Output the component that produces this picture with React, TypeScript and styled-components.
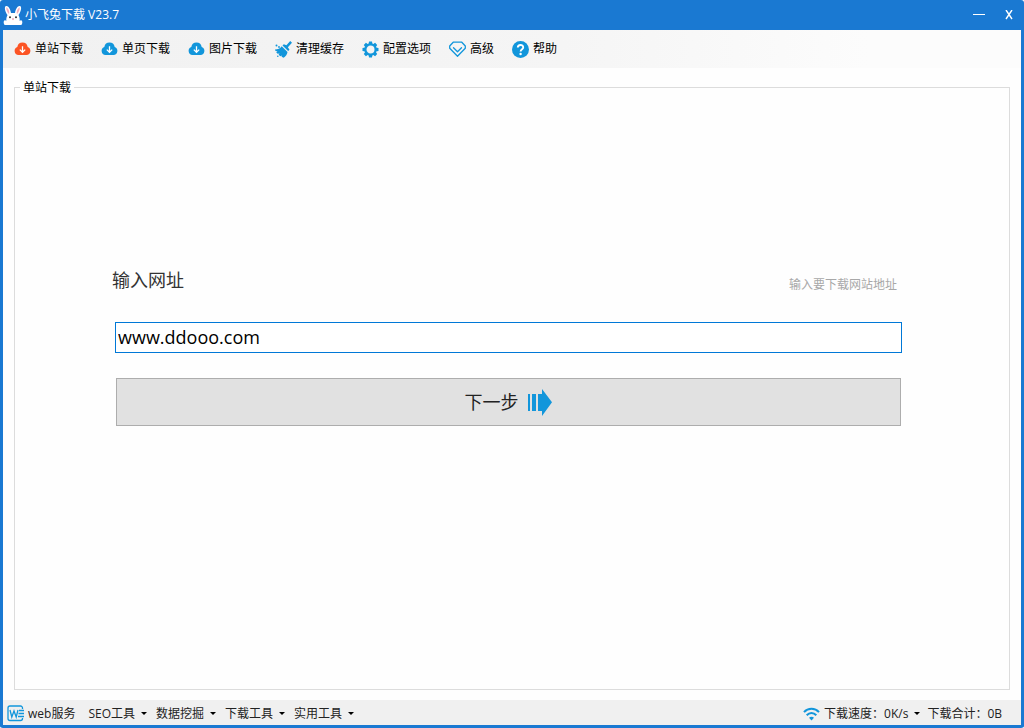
import React from "react";
import styled, { createGlobalStyle } from "styled-components";

const GlobalStyle = createGlobalStyle`
  * { box-sizing: border-box; }
  body {
    margin: 0;
    background: #fff;
    color: #000;
    font: 12px/18px "Open Sans", "Noto Sans CJK SC", sans-serif;
  }
  button, input { font: inherit; color: inherit; }
`;

const Window = styled.div`
  display: flex;
  flex-direction: column;
  min-height: 100vh;
  border: 3px solid #1a79d2;
  border-top: 0;
  border-radius: 3px;
  background: #fefefe;
`;

const TitleBar = styled.header`
  display: flex;
  align-items: center;
  height: 30px;
  background: #1a79d2;
  color: #fff;
`;

const Title = styled.h1`
  flex: 1;
  margin: 0 0 0 2px;
  font-size: 12px;
  font-weight: 400;
`;

const WindowControls = styled.div`
  display: flex;
  gap: 6px;
`;

const WindowButton = styled.button`
  display: flex;
  align-items: center;
  justify-content: center;
  width: 24px;
  height: 30px;
  padding: 0;
  border: 0;
  background: none;
  color: #fff;
`;

const Toolbar = styled.nav`
  display: flex;
  align-items: center;
  gap: 18px;
  height: 38px;
  padding: 0 11px;
  background: linear-gradient(90deg, #f1f1f1, #f5f5f5 55%, #fcfcfc 85%);
`;

const ToolButton = styled.button`
  display: flex;
  align-items: center;
  gap: 4px;
  padding: 0;
  border: 0;
  background: none;
  white-space: nowrap;
`;

const Main = styled.main`
  flex: 1;
  display: flex;
  padding: 10px 11px;
`;

const Group = styled.fieldset`
  flex: 1;
  min-width: 0;
  margin: 0;
  padding: 169px 107px 0 100px;
  border: 1px solid #dcdcdc;
`;

const GroupTitle = styled.legend`
  margin-left: -95px;
  padding: 0 3px;
  line-height: 19px;
`;

const LabelRow = styled.div`
  display: flex;
  align-items: flex-end;
  justify-content: space-between;
  padding-right: 5px;
  margin-left: -3px;
`;

const FieldLabel = styled.label`
  color: #333;
  font-size: 18px;
  line-height: 28px;
`;

const Hint = styled.span`
  color: #a8a8a8;
`;

const UrlInput = styled.input`
  display: block;
  width: 100%;
  height: 31px;
  margin: 28px 0 25px;
  padding: 0 2px 2px;
  border: 1px solid #0078d7;
  border-radius: 0;
  outline: 0;
  background: #fff;
  color: #000;
  font-size: 18px;
`;

const NextButton = styled.button`
  display: flex;
  align-items: center;
  justify-content: center;
  gap: 9px;
  width: calc(100% - 2px);
  height: 48px;
  margin: 0 1px;
  border: 1px solid #adadad;
  background: #e1e1e1;
  color: #222;
  font-size: 18px;
`;

const StatusBar = styled.footer`
  display: flex;
  align-items: center;
  justify-content: space-between;
  height: 25px;
  padding: 2px 19px 0 4px;
  background: #f0f0f0;
  color: #222;
`;

const StatusGroup = styled.div<{ $gap: number }>`
  display: flex;
  align-items: center;
  gap: ${(p) => p.$gap}px;
  white-space: nowrap;
`;

const StatusButton = styled.button`
  display: flex;
  align-items: center;
  gap: 4px;
  padding: 0;
  border: 0;
  background: none;
`;

const Menus = styled(StatusGroup)`
  margin-left: 5px;
`;

const Caret = styled.span`
  margin-left: 2px;
  border: 3px solid transparent;
  border-top-color: #000;
  border-bottom: 0;
`;

const BLUE = "#1296db";

const Rabbit = () => (
  <svg width="20" height="20" viewBox="0 0 20 20" aria-hidden="true">
    <path d="M4.500 10C2.500 7 1 3 2.500 1.200 5 0 7.500 4 8 8h4c.5-4 3-8 5.500-6.800C19 3 17.500 7 15.500 10c1 2 1.300 3.500 1.200 6 .8-1.200 2.500-.8 2.600 1 .1 1.500-.4 2.400-1 3H1.700c-.6-.6-1.100-1.500-1-3 .1-1.800 1.800-2.200 2.600-1 -.1-2.500.2-4 1.200-6Z" fill="#fff" />
    <path d="M3.300 2.200C3 5 4.500 7.300 6 9 6.800 7 5.500 3.300 3.300 2.200ZM16.700 2.200C17 5 15.500 7.300 14 9c-.8-2 .5-5.700 2.700-6.800Z" fill="#f3aebd" />
    <circle cx="7" cy="12.200" r="1" fill="#333" />
    <circle cx="13" cy="12.200" r="1" fill="#333" />
    <path d="M8.800 13.500h2.400L10 15.200Z" fill="#f07d92" />
  </svg>
);

const Cloud = ({ color = BLUE }: { color?: string }) => (
  <svg width="17" height="17" viewBox="0 0 17 17" aria-hidden="true">
    <path d="M4.500 14A4.200 4.200 0 0 1 3.300 5.900 5.300 5.300 0 0 1 13.700 5.900 4.200 4.200 0 0 1 12.500 14Z" fill={color} />
    <path d="M8.500 5.300v5.800M5.800 8.600l2.700 2.700 2.700-2.700" fill="none" stroke="#fff" strokeWidth="1.300" />
  </svg>
);

const Broom = () => (
  <svg width="17" height="17" viewBox="0 0 17 17" aria-hidden="true" fill={BLUE}>
    <path d="M15.200 0 17 1.700 12.900 6.300l1.600 2.400-1.400 1.400L7.500 4.600l1.300-1.300 2.600.9Z" />
    <path d="M6.700 5.300 12.500 11c-.4 2.300-1.600 4.400-3.800 5.700L6.500 15.800l.7-1.200-1.900.6-1.700-1.500.9-1.200-1.900.3-1.400-1.600 1.300-.9-2-.3L0 8.600C2.800 8.500 5.200 7.500 6.700 5.300Z" />
    <circle cx="1.500" cy="4.500" r="1" />
    <circle cx="4" cy="6" r=".9" />
    <circle cx="2.800" cy="15.200" r=".8" />
  </svg>
);

const Gear = () => (
  <svg width="17" height="17" viewBox="0 0 17 17" aria-hidden="true">
    <g fill={BLUE}>
      {[0, 45, 90, 135].map((angle) => (
        <path key={angle} d="M7 .5h3l.5 3h-4ZM7 16.500h3l.5-3h-4Z" transform={`rotate(${angle} 8.500 8.500)`} />
      ))}
    </g>
    <circle cx="8.500" cy="8.500" r="5.100" fill="none" stroke={BLUE} strokeWidth="2.200" />
  </svg>
);

const Diamond = () => (
  <svg width="17" height="17" viewBox="0 0 17 17" aria-hidden="true" fill="none" stroke={BLUE} strokeWidth="1.300" strokeLinejoin="round" strokeLinecap="round">
    <path d="M4.200 1.200h8.600L16.300 5v2.200l-7.800 8-7.800-8V5Z" />
    <path d="M4.500 6.800 8.500 10.700l4-3.900" />
  </svg>
);

const Help = () => (
  <svg width="17" height="17" viewBox="0 0 17 17" aria-hidden="true">
    <circle cx="8.500" cy="8.500" r="8.500" fill={BLUE} />
    <path d="M5.800 6.600C5.800 3 11.300 3.200 11.200 6.400 11.200 8.200 8.600 8.200 8.600 10.600" fill="none" stroke="#fff" strokeWidth="1.900" />
    <circle cx="8.600" cy="13" r="1.200" fill="#fff" />
  </svg>
);

const NextArrow = () => (
  <svg width="25" height="28" viewBox="0 0 25 28" aria-hidden="true">
    <path d="M0 6h2v17H0ZM4 6h4v17H4ZM10 6h4V1l10 13.200L14 28v-5h-4Z" fill={BLUE} />
  </svg>
);

const WebIcon = () => (
  <svg width="17" height="17" viewBox="0 0 17 17" aria-hidden="true" fill="none" stroke={BLUE} strokeWidth="1.300">
    <path d="M15.500 4V3A2 2 0 0 0 13.500 1H3A2 2 0 0 0 1 3v10.500a2 2 0 0 0 2 2h10.500a2 2 0 0 0 2-2V13" />
    <path d="M3 5l1.800 7L7 6l2.200 6L11 5M12 5.500h5M11.500 8.500H17M11 11.500h6" />
  </svg>
);

const Wifi = () => (
  <svg width="17" height="14" viewBox="0 0 17 14" aria-hidden="true" fill="none" stroke={BLUE} strokeWidth="2">
    <path d="M1 5.200C5 .7 12 .7 16 5.200M3.700 8.300c2.800-3 6.800-3 9.600 0" />
    <path d="M6 10.800c1.500-1.400 3.500-1.400 5 0L8.500 13.500Z" fill={BLUE} stroke="none" />
  </svg>
);

const tools = [
  { label: "单站下载", icon: <Cloud color="#fc5424" /> },
  { label: "单页下载", icon: <Cloud /> },
  { label: "图片下载", icon: <Cloud /> },
  { label: "清理缓存", icon: <Broom /> },
  { label: "配置选项", icon: <Gear /> },
  { label: "高级", icon: <Diamond /> },
  { label: "帮助", icon: <Help /> },
];

const menus = ["SEO工具", "数据挖掘", "下载工具", "实用工具"];

export default function App() {
  return (
    <>
      <GlobalStyle />
      <Window>
        <TitleBar>
          <Rabbit />
          <Title>小飞兔下载 V23.7</Title>
          <WindowControls>
            <WindowButton aria-label="最小化">
              <svg width="12" height="2" aria-hidden="true"><path d="M0 0h12v1H0Z" fill="#fff" /></svg>
            </WindowButton>
            <WindowButton aria-label="关闭">
              <svg width="8" height="10" viewBox="0 0 8 10" aria-hidden="true">
                <path d="M1 0l6 9M7 0 1 9" stroke="#fff" strokeWidth="1.400" />
              </svg>
            </WindowButton>
          </WindowControls>
        </TitleBar>
        <Toolbar>
          {tools.map((tool) => (
            <ToolButton key={tool.label}>{tool.icon}{tool.label}</ToolButton>
          ))}
        </Toolbar>
        <Main>
          <Group>
            <GroupTitle>单站下载</GroupTitle>
            <LabelRow>
              <FieldLabel htmlFor="url">输入网址</FieldLabel>
              <Hint>输入要下载网站地址</Hint>
            </LabelRow>
            <UrlInput id="url" type="text" defaultValue="www.ddooo.com" />
            <NextButton>下一步<NextArrow /></NextButton>
          </Group>
        </Main>
        <StatusBar>
          <StatusGroup $gap={8}>
            <StatusButton><WebIcon />web服务</StatusButton>
            <Menus $gap={9}>
              {menus.map((menu) => (
                <StatusButton key={menu}>{menu}<Caret /></StatusButton>
              ))}
            </Menus>
          </StatusGroup>
          <StatusGroup $gap={7}>
            <StatusButton><Wifi />下载速度：0K/s<Caret /></StatusButton>
            <span>下载合计：0B</span>
          </StatusGroup>
        </StatusBar>
      </Window>
    </>
  );
}
